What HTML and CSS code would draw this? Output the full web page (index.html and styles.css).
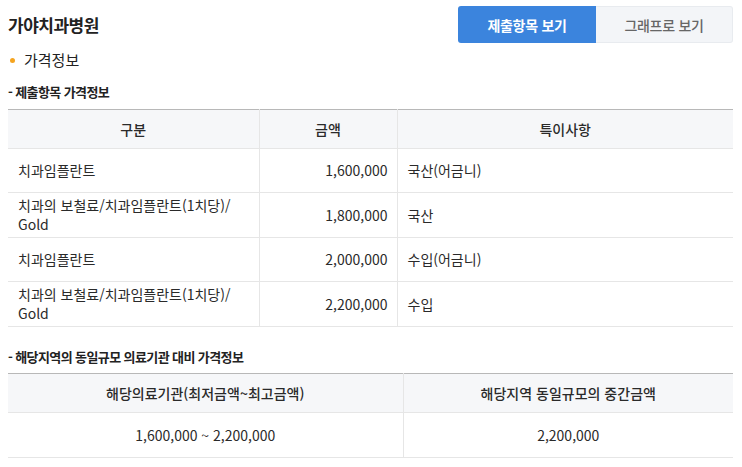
FILE: index.html
```html
<!DOCTYPE html>
<html lang="ko">
<head>
<meta charset="utf-8">
<link rel="stylesheet" href="styles.css">
</head>
<body>
<div class="page">
  <div class="top">
    <h1 class="title">가야치과병원</h1>
    <div class="tabs">
      <button class="tab tab-on">제출항목 보기</button>
      <button class="tab tab-off">그래프로 보기</button>
    </div>
  </div>
  <div class="section-title"><span class="dot"></span>가격정보</div>
  <div class="sub-title">- 제출항목 가격정보</div>
  <table class="grid grid-items">
    <colgroup><col class="c1"><col class="c2"><col class="c3"></colgroup>
    <thead>
      <tr><th>구분</th><th>금액</th><th>특이사항</th></tr>
    </thead>
    <tbody>
      <tr><td>치과임플란트</td><td class="num">1,600,000</td><td>국산(어금니)</td></tr>
      <tr class="tall"><td>치과의 보철료/치과임플란트(1치당)/<br>Gold</td><td class="num">1,800,000</td><td>국산</td></tr>
      <tr><td>치과임플란트</td><td class="num">2,000,000</td><td>수입(어금니)</td></tr>
      <tr class="tall"><td>치과의 보철료/치과임플란트(1치당)/<br>Gold</td><td class="num">2,200,000</td><td>수입</td></tr>
    </tbody>
  </table>
  <div class="sub-title sub-2">- 해당지역의 동일규모 의료기관 대비 가격정보</div>
  <table class="grid grid-compare">
    <colgroup><col class="d1"><col class="d2"></colgroup>
    <thead>
      <tr><th>해당의료기관(최저금액~최고금액)</th><th>해당지역 동일규모의 중간금액</th></tr>
    </thead>
    <tbody>
      <tr class="tall"><td class="center">1,600,000 ~ 2,200,000</td><td class="center">2,200,000</td></tr>
    </tbody>
  </table>
</div>
</body>
</html>
```

FILE: styles.css
```css
* { box-sizing: border-box; }
html, body { margin: 0; padding: 0; background: #fff; }
body {
  font-family: "Noto Sans CJK KR", "Noto Sans", sans-serif;
  color: #2a2a2a;
  font-size: 14px;
}
.page { padding: 6px 9px 0 8px; }
.top {
  display: flex;
  justify-content: space-between;
  align-items: center;
  height: 37px;
}
.title {
  margin: 0;
  font-size: 17px;
  font-weight: 700;
  color: #222;
  letter-spacing: -0.5px;
  line-height: 24px;
}
.tabs { display: flex; height: 37px; }
.tab {
  font-family: inherit;
  font-size: 14px;
  font-weight: 700;
  border: 0;
  height: 37px;
  width: 138px;
  padding: 0;
  letter-spacing: -0.3px;
}
.tab-on {
  background: #3b84dd;
  color: #fff;
  border-radius: 3px 0 0 3px;
}
.tab-off {
  background: #f3f5f8;
  color: #666;
  width: 137px;
  border: 1px solid #e8ebef;
  border-left: 0;
  border-radius: 0 3px 3px 0;
  font-weight: 500;
}
.section-title {
  margin-top: 8px;
  line-height: 18px;
  font-size: 15px;
  color: #222;
  display: flex;
  align-items: center;
}
.dot {
  width: 5px;
  height: 5px;
  border-radius: 50%;
  background: #f5a41f;
  margin: 0 9px 0 2px;
}
.sub-title {
  margin-top: 14px;
  line-height: 18px;
  font-size: 13px;
  font-weight: 700;
  color: #222;
  letter-spacing: -0.6px;
}
.sub-2 { margin-top: 21px; }
.grid {
  width: 725px;
  border-collapse: collapse;
  table-layout: fixed;
  border-top: 1px solid #b8b8b8;
  margin-top: 8px;
}
.grid-compare { margin-top: 7px; }
.c1 { width: 251px; }
.c2 { width: 138px; }
.c3 { width: 336px; }
.d1 { width: 395px; }
.d2 { width: 330px; }
.grid th {
  background: #f6f7f9;
  font-weight: 500;
  color: #2a2a2a;
  height: 39px;
  font-size: 14px;
  padding: 0;
  border-bottom: 1px solid #e6e6e6;
  border-left: 1px solid #e6e6e6;
}
.grid td {
  height: 44px;
  padding: 2px 10px 2px 10px;
  line-height: 19px;
  border-bottom: 1px solid #e6e6e6;
  border-left: 1px solid #e6e6e6;
  vertical-align: middle;
  color: #2a2a2a;
}
.grid tr.tall td { height: 45px; }
.grid th:first-child, .grid td:first-child { border-left: 0; }
.grid td.num { text-align: right; padding-right: 9px; }
.grid td.center { text-align: center; }
```
